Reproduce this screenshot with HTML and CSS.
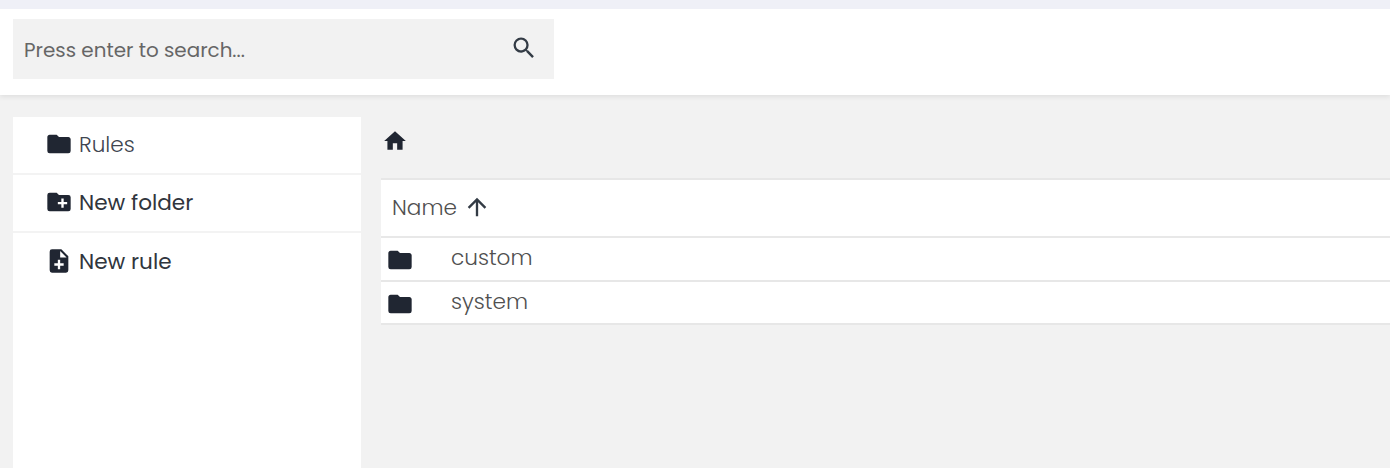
FILE: index.html
```html
<!DOCTYPE html>
<html lang="en">
<head>
<meta charset="utf-8">
<title>Rules</title>
<link rel="stylesheet" href="styles.css">
</head>
<body>
<svg class="sprite" aria-hidden="true">
  <symbol id="folder" viewBox="0 0 24 24"><path d="M10 4H4c-1.11 0-2 .89-2 2v12a2 2 0 0 0 2 2h16a2 2 0 0 0 2-2V8c0-1.11-.9-2-2-2h-8l-2-2z"/></symbol>
  <symbol id="folder-plus" viewBox="0 0 24 24"><path d="M20 6h-8l-2-2H4a2 2 0 0 0-2 2v12a2 2 0 0 0 2 2h16a2 2 0 0 0 2-2V8a2 2 0 0 0-2-2m-1 8h-3v3h-2v-3h-3v-2h3V9h2v3h3z"/></symbol>
  <symbol id="file-plus" viewBox="0 0 24 24"><path d="M14 2H6a2 2 0 0 0-2 2v16a2 2 0 0 0 2 2h12a2 2 0 0 0 2-2V8zm2 14h-3v3h-2v-3H8v-2h3v-3h2v3h3zm-3-7V3.500L18.500 9z"/></symbol>
  <symbol id="home" viewBox="0 0 24 24"><path d="M10 20v-6h4v6h5v-8h3L12 3 2 12h3v8h5z"/></symbol>
  <symbol id="arrow-up" viewBox="0 0 24 24"><path d="M13 20h-2V8l-5.500 5.500-1.420-1.420L12 4.160l7.920 7.920-1.420 1.420L13 8v12z"/></symbol>
  <symbol id="search" viewBox="0 0 24 24"><path d="M15.500 14h-.79l-.28-.27A6.471 6.471 0 0 0 16 9.500 6.500 6.500 0 1 0 9.500 16c1.610 0 3.090-.59 4.230-1.570l.27.28v.79l5 4.990L20.490 19l-4.990-5zm-6 0C7.010 14 5 11.990 5 9.500S7.010 5 9.500 5 14 7.010 14 9.500 11.990 14 9.500 14z"/></symbol>
</svg>
<header class="topbar">
  <div class="search">
    <span class="search-hint">Press enter to search...</span>
    <svg class="icon search-icon"><use href="#search"/></svg>
  </div>
</header>
<div class="layout">
  <nav class="sidebar">
    <a class="nav-item current"><svg class="icon"><use href="#folder"/></svg><span class="nav-label">Rules</span></a>
    <a class="nav-item"><svg class="icon"><use href="#folder-plus"/></svg><span class="nav-label">New folder</span></a>
    <a class="nav-item"><svg class="icon"><use href="#file-plus"/></svg><span class="nav-label">New rule</span></a>
  </nav>
  <main class="content">
    <div class="breadcrumb"><svg class="icon home"><use href="#home"/></svg></div>
    <div class="table">
      <div class="head"><span class="column">Name</span><svg class="icon arrow"><use href="#arrow-up"/></svg></div>
      <div class="row"><svg class="icon"><use href="#folder"/></svg><span class="cell">custom</span></div>
      <div class="row"><svg class="icon"><use href="#folder"/></svg><span class="cell">system</span></div>
    </div>
  </main>
</div>
</body>
</html>
```
FILE: styles.css
```css
* { box-sizing: border-box; }
body {
  margin: 0;
  height: 468px;
  overflow: hidden;
  display: flex;
  flex-direction: column;
  background: #f2f2f2;
  border-top: 9px solid #eff0f7;
  font: 21.600px/30px Poppins, Inter, sans-serif;
  color: #30353d;
}
.sprite { display: none; }
.icon { width: 28px; height: 28px; flex: none; fill: #202632; }
.topbar {
  flex: none;
  height: 86px;
  padding: 10px 13px;
  background: #fff;
  box-shadow: 0 2px 5px rgba(0, 0, 0, .08);
}
.search {
  display: flex;
  align-items: center;
  justify-content: space-between;
  width: 541px;
  height: 60px;
  padding: 0 16px 0 11px;
  background: #f2f2f2;
}
.search-hint { padding-top: 1px; font-size: 19.900px; color: #666; }
.search-icon { fill: #333b45; margin-bottom: 3px; }
.layout { flex: 1; display: flex; gap: 20px; padding: 22px 0 0 13px; }
.sidebar { width: 348px; background: #fff; }
.nav-item {
  display: flex;
  align-items: center;
  gap: 6px;
  height: 58.200px;
  padding: 0 0 2px 32px;
  border-bottom: 2px solid #f3f3f3;
}
.nav-item:last-child { border-bottom: 0; }
.nav-label { padding-top: 2px; }
.current { font-weight: 300; color: #404550; }
.content { flex: 1; }
.breadcrumb { height: 61px; padding: 11px 0 0 1px; }
.home { width: 26px; height: 26px; }
.table { background: #fff; border-top: 2px solid #e7e7e7; font-weight: 300; color: #505050; }
.head {
  display: flex;
  align-items: center;
  gap: 6px;
  height: 58px;
  padding: 0 0 2px 11px;
  border-bottom: 2px solid #e8e8e8;
}
.column { padding-top: 2px; }
.arrow { fill: #333b45; }
.row {
  display: flex;
  align-items: center;
  gap: 36px;
  height: 43.700px;
  padding-left: 4.500px;
  border-bottom: 2px solid #e7e7e7;
}
.row .icon { margin-top: 2px; }
.cell { padding-left: 1.500px; margin-top: -2px; }
```
